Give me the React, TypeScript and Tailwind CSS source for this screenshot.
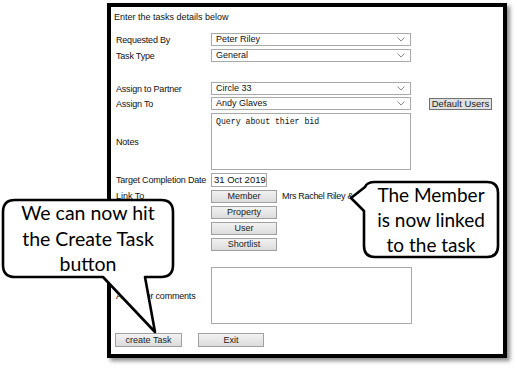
import React from "react";

function Chevron() {
  return (
    <svg width="8" height="5" viewBox="0 0 8 5" className="shrink-0">
      <path d="M0.5 0.5 L4 4 L7.5 0.5" fill="none" stroke="#8a8a8a" strokeWidth="1" />
    </svg>
  );
}

function Select({ value }: { value: string }) {
  return (
    <div className="w-[200px] h-[13px] border border-[#a9a9a9] bg-white flex items-center justify-between pl-[4px] pr-[5px] leading-none">
      <span>{value}</span>
      <Chevron />
    </div>
  );
}

function Btn({ label, className = "", dark = false }: { label: string; className?: string; dark?: boolean }) {
  return (
    <div
      className={
        "flex items-center justify-center border text-[#222] leading-none " +
        (dark ? "border-[#707070] bg-[#e1e1e1] " : "border-[#a0a0a0] bg-gradient-to-b from-[#f2f2f2] to-[#dcdcdc] ") +
        className
      }
    >
      {label}
    </div>
  );
}

function Row({ label, children, className = "" }: { label: string; children: React.ReactNode; className?: string }) {
  return (
    <div className={"flex items-center " + className}>
      <div className="w-[100px] pl-[5px] shrink-0 whitespace-nowrap tracking-[-0.2px] leading-[12px]">{label}</div>
      {children}
    </div>
  );
}

export default function App() {
  return (
    <div className="relative w-[517px] h-[370px] bg-white overflow-hidden">
      <div
        className="ml-[107px] mt-[3px] w-[400px] h-[355px] border-4 border-black bg-white shadow-[3px_3px_4px_rgba(0,0,0,0.45)] text-[9px] text-[#111] flex flex-col"
        style={{ fontFamily: '"Liberation Sans", Arial, sans-serif' }}
      >
        <div className="mt-[4px] pl-[3px] h-[12px] leading-[12px]">Enter the tasks details below</div>

        <Row label="Requested By" className="mt-[10px]">
          <Select value="Peter Riley" />
        </Row>
        <Row label="Task Type" className="mt-[3px]">
          <Select value="General" />
        </Row>
        <Row label="Assign to Partner" className="mt-[20px]">
          <Select value="Circle 33" />
        </Row>
        <Row label="Assign To" className="mt-[2px]">
          <Select value="Andy Glaves" />
          <Btn dark label="Default Users" className="ml-[18px] w-[63px] h-[12px] text-[9.5px]" />
        </Row>
        <Row label="Notes" className="mt-[3px]">
          <div
            className="w-[200px] h-[57px] border border-[#a9a9a9] px-[4px] pt-[4px] text-[8.2px] leading-none"
            style={{ fontFamily: '"Liberation Mono", "Courier New", monospace' }}
          >
            Query about thier bid
          </div>
        </Row>
        <Row label="Target Completion Date" className="mt-[3px]">
          <div className="w-[56px] h-[14px] border border-[#a9a9a9] pl-[2px] flex items-center leading-none text-[9.5px]">
            31 Oct 2019
          </div>
        </Row>
        <div className="flex mt-[3px]">
          <div className="w-[100px] pl-[5px] shrink-0 h-[13px] leading-[13px]">Link To</div>
          <div className="flex flex-col gap-[3px]">
            <div className="flex items-center h-[13px]">
              <Btn label="Member" className="w-[66px] h-[13px]" />
              <span className="ml-[5px] whitespace-nowrap tracking-[-0.3px] leading-none">Mrs Rachel Riley &amp; Mr Peter Riley</span>
            </div>
            <Btn label="Property" className="w-[66px] h-[13px]" />
            <Btn label="User" className="w-[66px] h-[13px]" />
            <Btn label="Shortlist" className="w-[66px] h-[13px]" />
          </div>
        </div>
        <Row label="Add other comments" className="mt-[16px]">
          <div className="w-[201px] h-[57px] border border-[#a9a9a9]" />
        </Row>
        <div className="flex mt-[9px] pl-[4px] gap-[16px]">
          <Btn label="create Task" className="w-[67px] h-[14px]" />
          <Btn label="Exit" className="w-[66px] h-[14px]" />
        </div>
      </div>

      {/* callouts */}
      <div className="absolute left-0 top-0 w-[517px] h-[370px] pointer-events-none">
        <svg width="517" height="370" className="absolute left-0 top-0">
          <path
            d="M375 182 H487 Q498 182 498 193 V246 Q498 257 487 257 H375 Q364 257 364 246 V211 L351 198 L365 187 Q367 182 375 182 Z"
            fill="white"
            stroke="black"
            strokeWidth="2.6"
            strokeLinejoin="round"
          />
          <path
            d="M15 200 H161 Q173 200 173 212 V265 Q173 277 161 277 H145 L155 332 L103 277 H15 Q3 277 3 265 V212 Q3 200 15 200 Z"
            fill="white"
            stroke="black"
            strokeWidth="2.6"
            strokeLinejoin="round"
          />
        </svg>
        <div
          className="absolute left-[364px] top-[182px] w-[134px] h-[75px] flex flex-col items-center justify-center text-[19px] leading-[25px] text-black"
          style={{ fontFamily: "Lato, 'Open Sans', sans-serif" }}
        >
          <span>The Member</span>
          <span>is now linked</span>
          <span>to the task</span>
        </div>
        <div
          className="absolute left-[3px] top-[200px] w-[170px] h-[77px] flex flex-col items-center justify-center text-[19.5px] leading-[25.5px] text-black"
          style={{ fontFamily: "Lato, 'Open Sans', sans-serif" }}
        >
          <span>We can now hit</span>
          <span>the Create Task</span>
          <span>button</span>
        </div>
      </div>
    </div>
  );
}
